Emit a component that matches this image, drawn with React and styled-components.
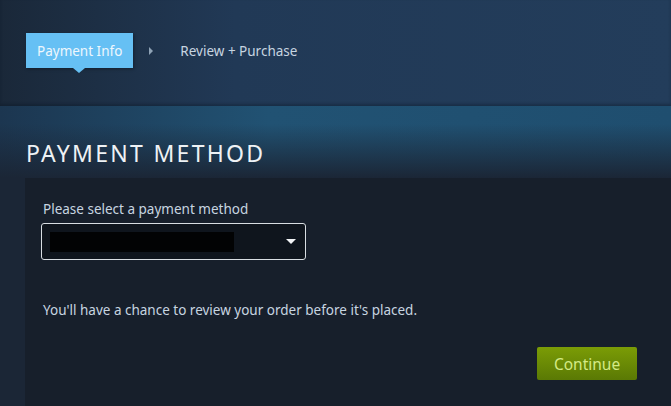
import { createGlobalStyle, styled } from "styled-components"

const GlobalStyle = createGlobalStyle`
    html, body {
        margin: 0;
        padding: 0;
        background: #1b2636;
        font-family: "Noto Sans", "Liberation Sans", Arial, sans-serif;
    }
`

const Page = styled.div`
    width: 671px;
    height: 406px;
    overflow: hidden;
    display: flex;
    flex-direction: column;
    background: #1b2636;
`

const Header = styled.div`
    height: 106px;
    box-sizing: border-box;
    padding: 33px 0 0 26px;
    background: linear-gradient(90deg, #1a2839 0%, #213956 35%, #233d5b 100%);
    box-shadow: inset 0 -2px 3px rgba(10, 20, 35, 0.35);
`

const Steps = styled.div`
    display: flex;
    align-items: center;
`

const ActiveStep = styled.div`
    position: relative;
    height: 35px;
    padding: 0 11px;
    display: flex;
    align-items: center;
    background: #66c0f4;
    color: #eef7fd;
    font-size: 13.5px;
    box-shadow: 1px 1px 3px rgba(0, 0, 0, 0.35);

    &::after {
        content: "";
        position: absolute;
        left: 47px;
        bottom: -5px;
        border-left: 6px solid transparent;
        border-right: 6px solid transparent;
        border-top: 5px solid #66c0f4;
    }
`

const Arrow = styled.span`
    margin: 0 27px 0 16px;
    width: 0;
    height: 0;
    border-top: 4px solid transparent;
    border-bottom: 4px solid transparent;
    border-left: 4px solid #8fa3b6;
`

const Step = styled.span`
    color: #c7d5e0;
    font-size: 13.5px;
`

const TitleBand = styled.div`
    height: 72px;
    box-sizing: border-box;
    padding: 34px 0 0 26px;
    background:
        linear-gradient(180deg, rgba(27, 38, 54, 0) 0%, rgba(27, 38, 54, 0) 25%, #1b2636 100%),
        linear-gradient(90deg, #1c3650 0%, #215273 40%, #1f4e6f 100%);
`

const Title = styled.h1`
    margin: 0;
    color: #eef2f5;
    font-size: 23px;
    font-weight: 400;
    letter-spacing: 2.3px;
    line-height: 26px;
`

const Panel = styled.div`
    flex: 1;
    margin-left: 25px;
    padding: 22px 0 0 18px;
    background: #171f2b;
    display: flex;
    flex-direction: column;
`

const Label = styled.div`
    color: #c7d5e0;
    font-size: 13.5px;
    line-height: 18px;
`

const Select = styled.div`
    margin: 5px 0 0 -2px;
    width: 265px;
    height: 37px;
    box-sizing: border-box;
    border: 1px solid #d8dde2;
    border-radius: 3px;
    background: #0f151d;
    display: flex;
    align-items: center;
    justify-content: space-between;
    padding: 0 9px 0 8px;
`

const Redacted = styled.div`
    width: 184px;
    height: 20px;
    background: #020304;
`

const Caret = styled.span`
    width: 0;
    height: 0;
    border-left: 5px solid transparent;
    border-right: 5px solid transparent;
    border-top: 5px solid #f2f4f6;
`

const Note = styled.p`
    margin: 41px 0 0;
    color: #c7d5e0;
    font-size: 13.5px;
    line-height: 18px;
`

const Actions = styled.div`
    display: flex;
    justify-content: flex-end;
    padding-right: 34px;
    margin-top: 28px;
`

const Button = styled.button`
    width: 100px;
    height: 33px;
    border: none;
    border-radius: 2px;
    background: linear-gradient(180deg, #7b9c06 0%, #5a7904 100%);
    color: #d4ea86;
    font-family: inherit;
    font-size: 15.5px;
    cursor: pointer;
`

const App = () => {
    return (
        <Page>
            <GlobalStyle />
            <Header>
                <Steps>
                    <ActiveStep>Payment Info</ActiveStep>
                    <Arrow />
                    <Step>Review + Purchase</Step>
                </Steps>
            </Header>
            <TitleBand>
                <Title>PAYMENT METHOD</Title>
            </TitleBand>
            <Panel>
                <Label>Please select a payment method</Label>
                <Select>
                    <Redacted />
                    <Caret />
                </Select>
                <Note>You'll have a chance to review your order before it's placed.</Note>
                <Actions>
                    <Button>Continue</Button>
                </Actions>
            </Panel>
        </Page>
    )
}

export default App
